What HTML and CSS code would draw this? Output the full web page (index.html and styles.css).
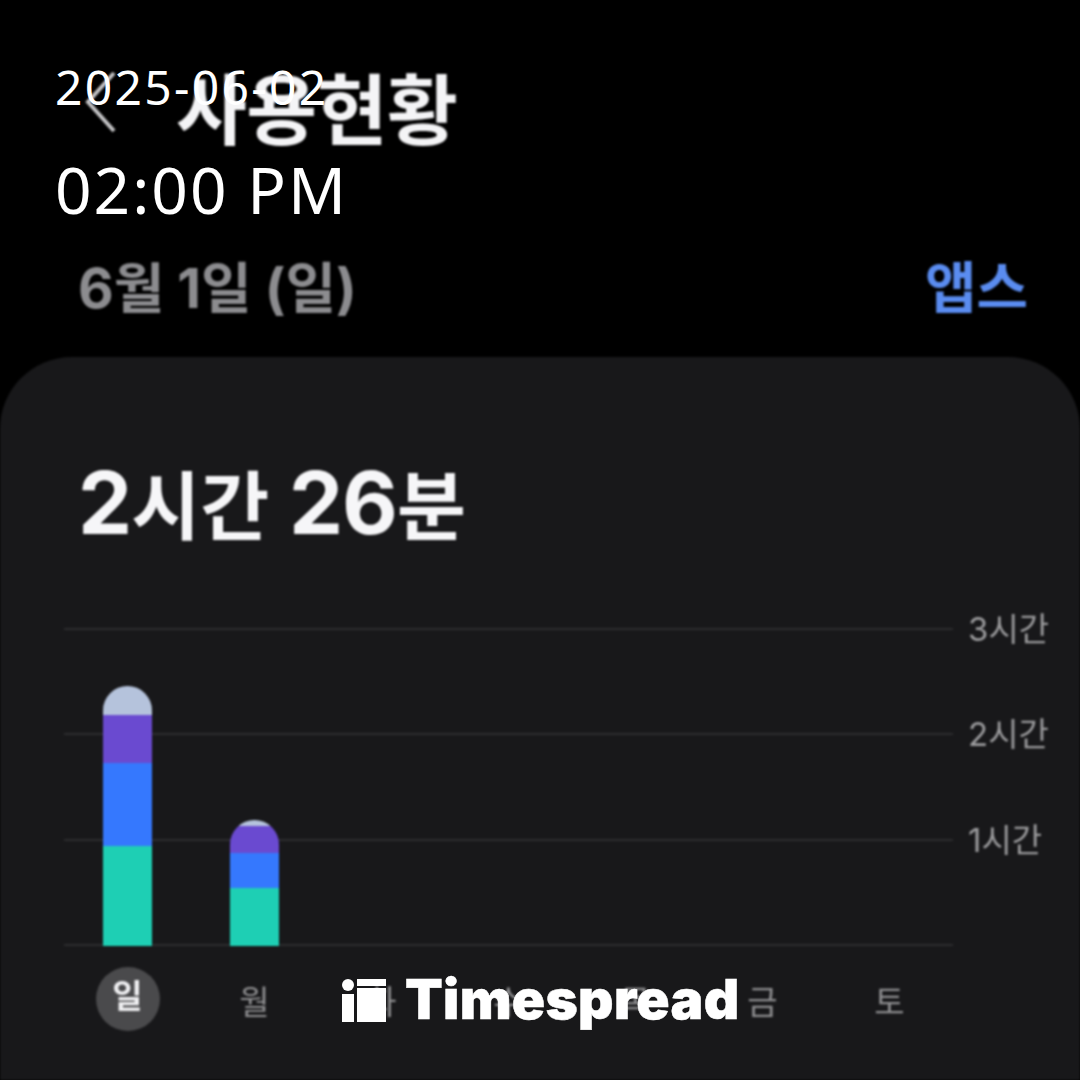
FILE: index.html
```html
<!DOCTYPE html>
<html lang="ko">

<head>
    <meta charset="UTF-8">
    <title>사용현황</title>
    <link rel="stylesheet" href="styles.css">
</head>

<body>
    <div class="stamp">
        <p class="stamp-date">2025-06-02</p>
        <p class="stamp-time">02:00 PM</p>
    </div>

    <div class="screen">
        <header class="top-bar">
            <svg class="back-icon" width="32" height="64" viewBox="0 0 32 64">
                <path d="M29 3 L3 32 L29 61" fill="none" stroke="#c4c4c6" stroke-width="4" />
            </svg>
            <h1 class="page-title">사용현황</h1>
        </header>

        <div class="date-row">
            <span class="date-label">6월 1일 (일)</span>
            <span class="apps-link">앱스</span>
        </div>

        <section class="card">
            <h2 class="total"><span class="num">2</span>시간 <span class="num">26</span>분</h2>

            <div class="chart">
                <div class="grid-row"><span class="axis-label">3시간</span></div>
                <div class="grid-row"><span class="axis-label">2시간</span></div>
                <div class="grid-row"><span class="axis-label">1시간</span></div>
                <div class="grid-base"></div>

                <div class="bars">
                    <div class="bar">
                        <div class="seg seg-other" style="height: 29px"></div>
                        <div class="seg seg-purple" style="height: 48px"></div>
                        <div class="seg seg-blue" style="height: 83px"></div>
                        <div class="seg seg-teal" style="height: 100px"></div>
                    </div>
                    <div class="bar">
                        <div class="seg seg-other" style="height: 6px"></div>
                        <div class="seg seg-purple" style="height: 27px"></div>
                        <div class="seg seg-blue" style="height: 35px"></div>
                        <div class="seg seg-teal" style="height: 58px"></div>
                    </div>
                    <div class="bar"></div>
                    <div class="bar"></div>
                    <div class="bar"></div>
                    <div class="bar"></div>
                    <div class="bar"></div>
                </div>
            </div>

            <div class="days">
                <span class="day day-active">일</span>
                <span class="day">월</span>
                <span class="day">화</span>
                <span class="day">수</span>
                <span class="day">목</span>
                <span class="day">금</span>
                <span class="day">토</span>
            </div>
        </section>
    </div>

    <div class="brand">
        <svg class="brand-icon" width="44" height="44" viewBox="0 0 44 44">
            <circle cx="6" cy="6" r="6" fill="#fff" />
            <rect x="0" y="15" width="12" height="28" fill="#fff" />
            <rect x="15" y="0" width="29" height="7" fill="#fff" />
            <rect x="15" y="9" width="29" height="34" fill="#fff" />
        </svg>
        <span class="brand-name">Timespread</span>
    </div>
</body>

</html>
```

FILE: styles.css
```css
* {
    box-sizing: border-box;
}

html,
body {
    margin: 0;
    height: 1080px;
    overflow: hidden;
    background-color: #000;
}

body {
    position: relative;
    font-family: Inter, "Noto Sans CJK KR", sans-serif;
}

/* Source capture is an upscaled phone shot, so it reads a bit soft */
.screen {
    display: flex;
    flex-direction: column;
    height: 1080px;
    filter: blur(0.8px);
}

.top-bar {
    display: flex;
    align-items: flex-start;
    height: 200px;
    padding: 70px 0 0 85px;
}

.back-icon {
    flex: none;
}

.page-title {
    margin: -14px 0 0 59px;
    font-size: 77px;
    font-weight: 700;
    line-height: 110px;
    letter-spacing: -0.5px;
    color: #f4f4f6;
}

.date-row {
    display: flex;
    justify-content: space-between;
    align-items: center;
    height: 157px;
    padding: 10px 52px 0 78px;
}

.date-label {
    font-size: 55px;
    font-weight: 700;
    color: #8c8c8f;
}

.apps-link {
    font-size: 56px;
    font-weight: 700;
    color: #5a8cf0;
}

.card {
    flex: 1;
    padding: 86px 0 0 64px;
    border-radius: 72px 72px 0 0;
    background-color: #18181a;
}

.total {
    margin: 0;
    height: 185px;
    padding-left: 14px;
    font-size: 75px;
    font-weight: 700;
    line-height: 120px;
    word-spacing: 2px;
    color: #f6f6f8;
}

.total .num {
    font-size: 86px;
    letter-spacing: -1px;
}

.chart {
    position: relative;
    width: 889px;
}

.grid-row {
    position: relative;
    height: 105.4px;
    border-top: 2px solid #2c2c2e;
}

.grid-base {
    border-top: 2px solid #2c2c2e;
}

.axis-label {
    position: absolute;
    left: 904px;
    top: -22px;
    font-size: 33px;
    line-height: 42px;
    white-space: nowrap;
    color: #9b9b9d;
}

.bars {
    position: absolute;
    inset: 0;
    display: grid;
    grid-template-columns: repeat(7, 127px);
    align-items: end;
    justify-items: center;
}

.bar {
    display: flex;
    flex-direction: column;
    width: 49px;
    overflow: hidden;
    border-radius: 25px 25px 0 0;
}

.seg-other {
    background-color: #b5c3dc;
}

.seg-purple {
    background-color: #6a4ad0;
}

.seg-blue {
    background-color: #3578fe;
}

.seg-teal {
    background-color: #1ecfb4;
}

.days {
    display: grid;
    grid-template-columns: repeat(7, 127px);
    justify-items: center;
    width: 889px;
    margin-top: 21px;
}

.day {
    width: 64px;
    height: 64px;
    font-size: 33px;
    line-height: 70px;
    text-align: center;
    color: #8e8e90;
}

.day-active {
    border-radius: 50%;
    font-weight: 700;
    line-height: 58px;
    background-color: #4a4a4c;
    color: #f0f0f2;
}

/* Date stamp and logo sit on top of the screenshot */
.stamp {
    position: absolute;
    left: 55px;
    top: 56px;
    z-index: 2;
    font-family: "Noto Sans", sans-serif;
    color: #fff;
}

.stamp-date {
    margin: 0;
    font-size: 48px;
    line-height: 62px;
    letter-spacing: 2.3px;
}

.stamp-time {
    margin: 28px 0 0;
    font-size: 64px;
    line-height: 88px;
    letter-spacing: 2px;
}

.brand {
    position: absolute;
    left: 342px;
    top: 979px;
    z-index: 2;
    display: flex;
    align-items: flex-start;
    gap: 19px;
}

.brand-icon {
    flex: none;
}

.brand-name {
    font-family: Inter, sans-serif;
    font-size: 55px;
    font-weight: 900;
    line-height: 41px;
    letter-spacing: 0.3px;
    color: #fff;
    -webkit-text-stroke: 0.5px #fff;
}
```
